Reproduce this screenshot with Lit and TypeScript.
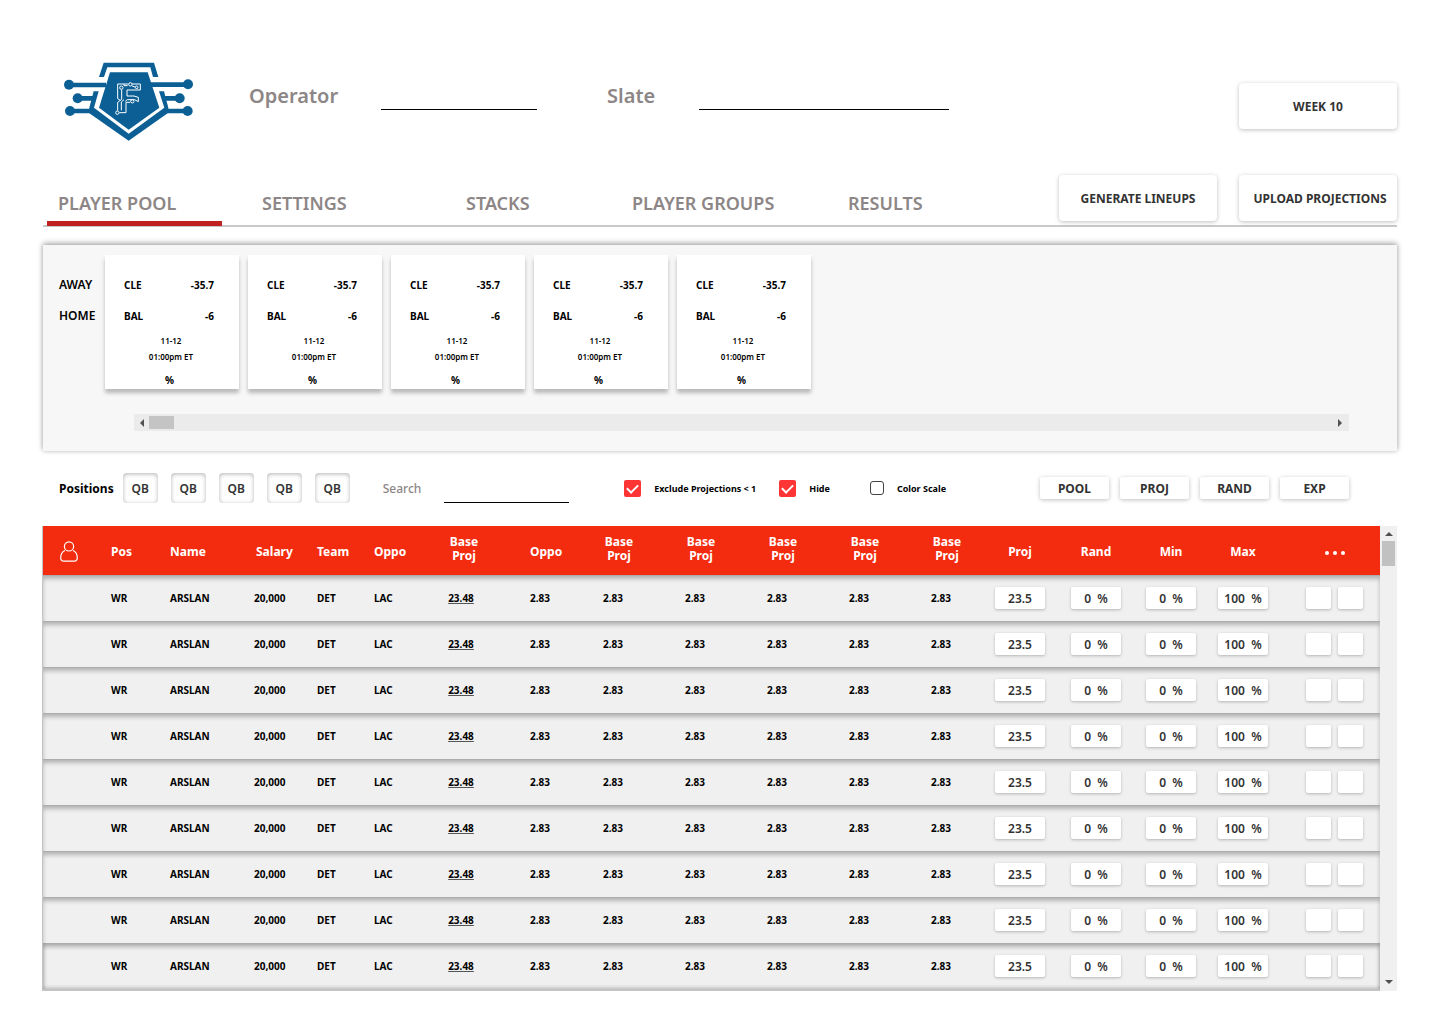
import { LitElement, html, css } from "lit";
import { customElement } from "lit/decorators.js";

const GAMES = Array.from({ length: 5 }, () => ({
  away: "CLE",
  home: "BAL",
  awayLine: "-35.7",
  homeLine: "-6",
  date: "11-12",
  time: "01:00pm ET",
}));

const ROWS = Array.from({ length: 9 }, () => ({
  pos: "WR",
  name: "ARSLAN",
  salary: "20,000",
  team: "DET",
  oppo: "LAC",
  base: "23.48",
  oppoValue: "2.83",
  stats: ["2.83", "2.83", "2.83", "2.83", "2.83"],
  proj: "23.5",
  rand: "0  %",
  min: "0  %",
  max: "100  %",
}));

const TABS = ["PLAYER POOL", "SETTINGS", "STACKS", "PLAYER GROUPS", "RESULTS"];
const COLUMNS = [
  "icon", "pos", "name", "salary", "team", "oppo", "stat", "oppo2",
  "stat", "stat", "stat", "stat", "stat", "proj", "rand", "min", "max", "more",
];

@customElement("app-logo")
export class AppLogo extends LitElement {
  static styles = css`
    :host { display: block; }
    svg { display: block; width: 129px; height: 79px; }
  `;

  render() {
    return html`
      <svg viewBox="42 37 387 237" role="img" aria-label="Logo">
        <g fill="#0b5f95">
          <path d="M147 82 161 39H312L325 82H309L301 53H172L162 82Z" />
          <path d="M180 68H293L328 174 236 240 147 174Z" />
          <path d="M131 125H146L132 174 236 252 343 174 327 125H342L355 174 354 190 236 273 117 190 118 174Z" />
          <circle cx="57" cy="105" r="15" /><circle cx="83" cy="146" r="15" /><circle cx="60" cy="184" r="15" />
          <circle cx="414" cy="104" r="15" /><circle cx="389" cy="146" r="15" /><circle cx="413" cy="184" r="15" />
        </g>
        <g stroke="#0b5f95" stroke-width="14">
          <path d="M57 106H168M83 146H132M60 184H122M300 105H414M340 146H389M350 184H414" />
        </g>
        <g fill="none" stroke="#fff" stroke-width="3">
          <path d="M235 103H203V147L211 152M246 103H271V121H231V139H252L265 143V156L254 150H232L226 155M240 158H228V189H208M203 183V158L215 149V120M246 109 255 112M222 103V108H233M222 150 214 157V182" />
          <circle cx="241" cy="104" r="5" /><circle cx="260" cy="113" r="4" /><circle cx="214" cy="114" r="5" />
          <circle cx="247" cy="155" r="5" /><circle cx="202" cy="189" r="5" />
        </g>
      </svg>
    `;
  }
}

@customElement("app-root")
export class AppRoot extends LitElement {
  static styles = css`
    :host {
      display: block;
      background: #fff;
      color: #000;
      font-family: "Noto Sans", "Open Sans", sans-serif;
      font-size: 12px;
      font-weight: 600;
    }
    * { box-sizing: border-box; }
    button, input { font: inherit; color: inherit; margin: 0; padding: 0; border: 0; }
    button { cursor: pointer; }
    .page { padding: 62px 43px 32px; }

    .top { display: flex; align-items: flex-start; padding-left: 21px; }
    .field { display: flex; align-items: center; color: #8d8686; font-size: 20px; line-height: 28px; padding-top: 20px; }
    .operator { margin-left: 56px; gap: 43px; }
    .slate { margin-left: 70px; gap: 44px; }
    .line { background: transparent; border-bottom: 1px solid #000; outline: none; height: 28px; font-size: 16px; color: #333; }
    .operator .line { width: 156px; }
    .slate .line { width: 250px; }
    .card-button {
      width: 158px; height: 46px; background: #fff; color: #333; border-radius: 4px;
      font-size: 12px; font-weight: 700; white-space: nowrap;
      box-shadow: 0 1px 4px rgba(0, 0, 0, 0.25);
    }
    .week { margin: 21px 0 0 auto; }

    .bar { display: flex; justify-content: space-between; margin-top: 34px; border-bottom: 2px solid #c8c9c9; }
    .tabs { display: grid; grid-template-columns: 204px 204px 166px 216px auto; padding-left: 4px; align-items: end; }
    .tab {
      justify-self: start; padding: 0 11px 6px; color: #8d8686; text-decoration: none;
      font-size: 18px; font-weight: 600; line-height: 24px; border-bottom: 5px solid transparent;
      margin-bottom: -1px; white-space: nowrap;
    }
    .tab.active { width: 175px; border-color: #c02222; }
    .actions { display: flex; gap: 22px; padding-bottom: 4px; }
    .upload { padding-left: 4px; }

    .games {
      margin-top: 18px; padding: 10px 48px 20px 16px; background: #f7f7f7;
      box-shadow: 0 -2px 6px rgba(0, 0, 0, 0.28), 0 0 4px rgba(0, 0, 0, 0.18);
    }
    .strip { display: flex; }
    .sides { width: 46px; padding-top: 22px; display: flex; flex-direction: column; gap: 15px; line-height: 16px; }
    .cards { display: flex; gap: 9px; }
    .game {
      width: 134px; height: 134px; padding: 23px 25px 0 19px; background: #fff; font-size: 10px;
      line-height: 15px; box-shadow: 0 4px 4px rgba(0, 0, 0, 0.25); font-weight: 700;
    }
    .side { display: flex; justify-content: space-between; margin-bottom: 16px; }
    .when { font-size: 8px; line-height: 16px; text-align: center; font-weight: 600; padding-left: 4px; margin-top: -7px; }
    .share { text-align: center; margin-top: 8px; padding-left: 1px; }

    .hscroll { margin: 25px 0 0 75px; padding-right: 2px; height: 17px; background: #ebebeb; display: flex; align-items: center; justify-content: space-between; }
    .hscroll-start { display: flex; align-items: center; }
    .arrow { width: 15px; height: 15px; background: transparent; display: grid; place-items: center; }
    .arrow svg { display: block; fill: #505050; }
    .hthumb { width: 25px; height: 13px; background: #c4c4c4; }

    .filters { display: flex; align-items: center; height: 30px; margin-top: 22px; padding: 0 48px 0 16px; white-space: nowrap; font-weight: 700; }
    .positions { display: flex; align-items: center; gap: 13px; margin-left: 9px; }
    .position {
      width: 35px; height: 30px; border-radius: 4px; background: #fff; color: #333; font-weight: 600;
      box-shadow: inset 0 1px 4px rgba(0, 0, 0, 0.3);
    }
    .search { display: flex; align-items: center; gap: 23px; margin-left: 33px; color: #8d8686; font-weight: 500; }
    .search .line { width: 125px; height: 30px; font-size: 12px; }
    .checks { display: flex; align-items: center; margin-left: 55px; font-size: 9px; }
    .check { display: flex; align-items: center; gap: 13px; }
    .hide { margin-left: 23px; }
    .scale { margin-left: 40px; }
    .check input {
      appearance: none; width: 14px; height: 14px; border: 1px solid #444; border-radius: 3px;
      display: grid; place-items: center;
    }
    .check input:checked { width: 17px; height: 17px; background: #ff3535; border: 0; border-radius: 2px; }
    .check input:checked::after {
      content: ""; width: 9px; height: 5px; border-left: 2px solid #fff; border-bottom: 2px solid #fff;
      transform: translateY(-1px) rotate(-45deg);
    }
    .modes { display: flex; gap: 11px; margin-left: auto; }
    .mode { width: 69px; height: 22px; background: #fff; color: #333; border-radius: 2px; box-shadow: 0 1px 4px rgba(0, 0, 0, 0.25); }

    .pool { display: flex; margin-top: 23px; }
    .grid { flex: 1; min-width: 0; background: #c4c4c4; padding-bottom: 2px; box-shadow: -1px 0 0 #c4c4c4; }
    table { width: 100%; table-layout: fixed; border-collapse: separate; border-spacing: 0; }
    th, td { padding: 0; text-align: left; white-space: nowrap; }
    thead tr { height: 49px; background: #f42c0f; color: #fff; line-height: 14px; }
    th { font-weight: 700; padding-top: 2px; }
    th.two { padding: 0 0 4px; }
    tbody tr {
      height: 46px; background: #f0f0f0; font-size: 10px; font-weight: 700;
      box-shadow: inset 0 4px 4px rgba(0, 0, 0, 0.25), inset 0 1px 0 rgba(0, 0, 0, 0.06);
    }
    tbody tr:last-child { box-shadow: inset 0 4px 4px rgba(0, 0, 0, 0.25), inset 0 -1px 4px rgba(0, 0, 0, 0.25); }
    .c-icon { width: 68px; }
    .c-pos { width: 59px; }
    .c-name { width: 84px; }
    .c-salary { width: 63px; }
    .c-team { width: 57px; }
    .c-oppo { width: 49px; }
    .c-stat { width: 82px; }
    .c-oppo2 { width: 73px; }
    .c-proj { width: 64px; }
    .c-rand { width: 88px; }
    .c-min { width: 62px; }
    .c-max { width: 82px; }
    .c-more { width: 96px; }
    th.icon { padding-left: 17px; }
    th.salary { padding-left: 2px; }
    th.mid, td.mid { text-align: center; }
    td.stat { text-align: center; padding-right: 12px; }
    td.base { text-align: center; padding-right: 6px; text-decoration: underline #555 1px; text-underline-offset: 1px; }
    .oppo2 { padding-left: 25px; }
    td.more, th.more { text-align: center; padding-left: 5px; }
    th svg { display: block; }
    th.more svg { margin: 2px auto 0; }
    .value {
      display: block; margin: 0 auto; width: 50px; height: 22px; background: #fff; color: #333; border-radius: 2px;
      text-align: center; font-size: 12px; font-weight: 600; box-shadow: 0 1px 3px rgba(0, 0, 0, 0.25);
    }
    .flags { display: flex; justify-content: center; gap: 7px; }
    .flag { appearance: none; width: 25px; height: 22px; background: #fff; border-radius: 2px; box-shadow: 0 1px 3px rgba(0, 0, 0, 0.25); }
    .vscroll { width: 17px; padding-bottom: 2px; background: #f0f0f0; display: flex; flex-direction: column; justify-content: space-between; align-items: center; }
    .vscroll-start { display: flex; flex-direction: column; align-items: center; }
    .vthumb { width: 13px; height: 25px; background: #c1c1c1; }
  `;

  private renderGame(game: (typeof GAMES)[number]) {
    return html`
      <article class="game">
        <div class="side"><span>${game.away}</span><span>${game.awayLine}</span></div>
        <div class="side"><span>${game.home}</span><span>${game.homeLine}</span></div>
        <div class="when"><div>${game.date}</div><div>${game.time}</div></div>
        <div class="share">%</div>
      </article>
    `;
  }

  private renderRow(row: (typeof ROWS)[number]) {
    return html`
      <tr>
        <td></td>
        <td>${row.pos}</td>
        <td>${row.name}</td>
        <td>${row.salary}</td>
        <td>${row.team}</td>
        <td>${row.oppo}</td>
        <td class="base">${row.base}</td>
        <td class="oppo2">${row.oppoValue}</td>
        ${row.stats.map((s) => html`<td class="stat">${s}</td>`)}
        <td><input class="value" aria-label="Proj" .value=${row.proj} /></td>
        <td><input class="value" aria-label="Rand" .value=${row.rand} /></td>
        <td><input class="value" aria-label="Min" .value=${row.min} /></td>
        <td><input class="value" aria-label="Max" .value=${row.max} /></td>
        <td class="more">
          <div class="flags">
            <input class="flag" type="checkbox" aria-label="Lock" />
            <input class="flag" type="checkbox" aria-label="Exclude" />
          </div>
        </td>
      </tr>
    `;
  }

  render() {
    const baseHead = html`<th class="mid two">Base<br />Proj</th>`;
    return html`
      <div class="page">
        <header class="top">
          <app-logo></app-logo>
          <label class="field operator">Operator<input class="line" type="text" /></label>
          <label class="field slate">Slate<input class="line" type="text" /></label>
          <button class="card-button week">WEEK 10</button>
        </header>

        <div class="bar">
          <nav class="tabs">
            ${TABS.map((t, i) => html`<a class="tab ${i === 0 ? "active" : ""}" href="#">${t}</a>`)}
          </nav>
          <div class="actions">
            <button class="card-button">GENERATE LINEUPS</button>
            <button class="card-button upload">UPLOAD PROJECTIONS</button>
          </div>
        </div>

        <section class="games">
          <div class="strip">
            <div class="sides"><span>AWAY</span><span>HOME</span></div>
            <div class="cards">${GAMES.map((g) => this.renderGame(g))}</div>
          </div>
          <div class="hscroll">
            <div class="hscroll-start">
              <button class="arrow" aria-label="Scroll left">
                <svg width="4" height="8" viewBox="0 0 4 8"><path d="M4 0V8L0 4Z" /></svg>
              </button>
              <div class="hthumb"></div>
            </div>
            <button class="arrow" aria-label="Scroll right">
              <svg width="4" height="8" viewBox="0 0 4 8"><path d="M0 0V8L4 4Z" /></svg>
            </button>
          </div>
        </section>

        <section class="filters">
          <span>Positions</span>
          <div class="positions">
            ${[1, 2, 3, 4, 5].map(() => html`<button class="position">QB</button>`)}
          </div>
          <label class="search">Search<input class="line" type="text" /></label>
          <div class="checks">
            <label class="check"><input type="checkbox" checked />Exclude Projections &lt; 1</label>
            <label class="check hide"><input type="checkbox" checked />Hide</label>
            <label class="check scale"><input type="checkbox" />Color Scale</label>
          </div>
          <div class="modes">
            ${["POOL", "PROJ", "RAND", "EXP"].map((m) => html`<button class="mode">${m}</button>`)}
          </div>
        </section>

        <section class="pool">
          <div class="grid">
            <table>
              <colgroup>${COLUMNS.map((c) => html`<col class="c-${c}" />`)}</colgroup>
              <thead>
                <tr>
                  <th class="icon" aria-label="Player">
                    <svg width="18" height="21" viewBox="0 0 18 21" fill="none" stroke="#fff" stroke-width="1.2">
                      <circle cx="9" cy="5.4" r="4.6" />
                      <path d="M5 9.5C2.3 10.7 .7 13.4 .7 16.8C.7 18.9 1.9 20.2 3.9 20.2H14.1C16.1 20.2 17.3 18.9 17.3 16.8C17.3 13.4 15.7 10.7 13 9.5" />
                    </svg>
                  </th>
                  <th>Pos</th>
                  <th>Name</th>
                  <th class="salary">Salary</th>
                  <th>Team</th>
                  <th>Oppo</th>
                  ${baseHead}
                  <th class="oppo2">Oppo</th>
                  ${baseHead}${baseHead}${baseHead}${baseHead}${baseHead}
                  <th class="mid">Proj</th>
                  <th class="mid">Rand</th>
                  <th class="mid">Min</th>
                  <th class="mid">Max</th>
                  <th class="more" aria-label="More">
                    <svg width="20" height="4" viewBox="0 0 20 4" fill="#fff">
                      <circle cx="2" cy="2" r="2" /><circle cx="10" cy="2" r="2" /><circle cx="18" cy="2" r="2" />
                    </svg>
                  </th>
                </tr>
              </thead>
              <tbody>${ROWS.map((r) => this.renderRow(r))}</tbody>
            </table>
          </div>
          <div class="vscroll">
            <div class="vscroll-start">
              <button class="arrow" aria-label="Scroll up">
                <svg width="8" height="4" viewBox="0 0 8 4"><path d="M0 4H8L4 0Z" /></svg>
              </button>
              <div class="vthumb"></div>
            </div>
            <button class="arrow" aria-label="Scroll down">
              <svg width="8" height="4" viewBox="0 0 8 4"><path d="M0 0H8L4 4Z" /></svg>
            </button>
          </div>
        </section>
      </div>
    `;
  }
}
